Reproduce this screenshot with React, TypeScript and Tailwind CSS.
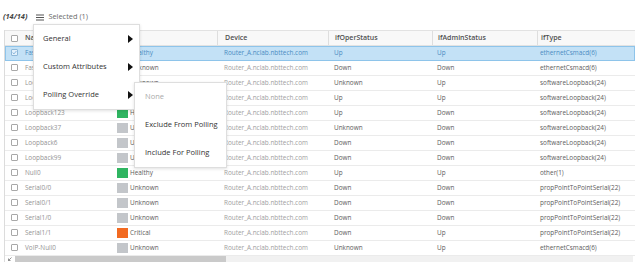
import React from "react";

type Row = {
  name: string;
  status: "Healthy" | "Unknown" | "Critical";
  oper: string;
  admin: string;
  type: string;
  selected?: boolean;
};

const rows: Row[] = [
  { name: "FastEthernet0/0", status: "Healthy", oper: "Up", admin: "Up", type: "ethernetCsmacd(6)", selected: true },
  { name: "FastEthernet0/1", status: "Unknown", oper: "Down", admin: "Down", type: "ethernetCsmacd(6)" },
  { name: "Loopback0", status: "Unknown", oper: "Unknown", admin: "Up", type: "softwareLoopback(24)" },
  { name: "Loopback1", status: "Unknown", oper: "Up", admin: "Up", type: "softwareLoopback(24)" },
  { name: "Loopback123", status: "Healthy", oper: "Up", admin: "Down", type: "softwareLoopback(24)" },
  { name: "Loopback37", status: "Unknown", oper: "Unknown", admin: "Down", type: "softwareLoopback(24)" },
  { name: "Loopback6", status: "Unknown", oper: "Down", admin: "Down", type: "softwareLoopback(24)" },
  { name: "Loopback99", status: "Unknown", oper: "Down", admin: "Down", type: "softwareLoopback(24)" },
  { name: "Null0", status: "Healthy", oper: "Up", admin: "Up", type: "other(1)" },
  { name: "Serial0/0", status: "Unknown", oper: "Down", admin: "Down", type: "propPointToPointSerial(22)" },
  { name: "Serial0/1", status: "Unknown", oper: "Down", admin: "Down", type: "propPointToPointSerial(22)" },
  { name: "Serial1/0", status: "Unknown", oper: "Down", admin: "Down", type: "propPointToPointSerial(22)" },
  { name: "Serial1/1", status: "Critical", oper: "Down", admin: "Up", type: "propPointToPointSerial(22)" },
  { name: "VoIP-Null0", status: "Unknown", oper: "Unknown", admin: "Up", type: "ethernetCsmacd(6)" },
];

const swatch: Record<Row["status"], string> = {
  Healthy: "bg-[#2fb561]",
  Unknown: "bg-[#c3c6ca]",
  Critical: "bg-[#f26a21]",
};

function Checkbox({ checked }: { checked?: boolean }) {
  return (
    <div
      className={
        "w-[7px] h-[7px] border rounded-[1px] flex items-center justify-center " +
        (checked ? "border-[#8fb8d8] bg-[#e4f1fb]" : "border-[#a8a8a8] bg-white")
      }
    >
      {checked && (
        <svg width="5" height="5" viewBox="0 0 5 5">
          <path d="M0.6 2.6 L2 3.9 L4.4 1" fill="none" stroke="#7fb0d8" strokeWidth="0.9" />
        </svg>
      )}
    </div>
  );
}

function Arrow() {
  return (
    <svg width="5" height="8" viewBox="0 0 5 8" className="shrink-0">
      <polygon points="0,0 5,4 0,8" fill="#111" />
    </svg>
  );
}

export default function App() {
  return (
    <div className="relative w-[635px] h-[268px] overflow-hidden bg-white font-['Open_Sans',sans-serif]">
      {/* toolbar */}
      <div className="h-[30px] flex items-center pl-[3px] pt-[4px]">
        <span className="text-[7.4px] font-bold italic text-[#444]">(14/14)</span>
        <svg width="8" height="7" viewBox="0 0 8 7" className="ml-[9px]">
          <rect x="0" y="0.5" width="8" height="1" fill="#555" />
          <rect x="0" y="3" width="8" height="1" fill="#555" />
          <rect x="0" y="5.5" width="8" height="1" fill="#555" />
        </svg>
        <span className="ml-[4px] text-[7.4px] text-[#6a6a6a]">Selected (1)</span>
      </div>

      {/* table */}
      <div className="ml-[4px] border-l border-[#dcdcdc]">
        {/* header */}
        <div className="h-[16px] flex items-center bg-[#f8f8f8] border-t border-b border-[#e2e2e2] text-[7px] font-semibold text-[#505050]">
          <div className="w-[105px] h-full flex items-center">
            <div className="ml-[6px]">
              <Checkbox />
            </div>
            <span className="ml-[7px]">Name</span>
          </div>
          <div className="w-[107px] h-full flex items-center pl-[7px] border-l border-[#dedede]">Status</div>
          <div className="w-[111px] h-full flex items-center pl-[7px] border-l border-[#dedede]">Device</div>
          <div className="w-[104px] h-full flex items-center pl-[6px] border-l border-[#dedede]">ifOperStatus</div>
          <div className="w-[105px] h-full flex items-center pl-[5px] border-l border-[#dedede]">ifAdminStatus</div>
          <div className="flex-1 h-full flex items-center pl-[3px] border-l border-[#dedede]">ifType</div>
        </div>

        {/* rows */}
        {rows.map((r) => (
          <div
            key={r.name}
            className={
              "h-[15px] flex items-center text-[6.4px] border-b " +
              (r.selected
                ? "bg-[#c3e1f6] border-[#8ec4ea] outline outline-1 outline-[#8ec4ea] -outline-offset-1 text-[#4a8cc2]"
                : "border-[#ebebeb]")
            }
          >
            <div className="w-[105px] flex items-center">
              <div className="ml-[6px]">
                <Checkbox checked={r.selected} />
              </div>
              <span className={"ml-[7px] " + (r.selected ? "" : "text-[#939393]")}>{r.name}</span>
            </div>
            <div className="w-[107px] flex items-center pl-[7px]">
              <div className={"w-[11px] h-[10px] " + swatch[r.status]} />
              <span className={"ml-[2px] " + (r.selected ? "" : "text-[#5c5c5c]")}>{r.status}</span>
            </div>
            <div className={"w-[111px] pl-[7px] " + (r.selected ? "" : "text-[#a0a0a0]")}>Router_A.nclab.nbttech.com</div>
            <div className={"w-[104px] pl-[6px] " + (r.selected ? "" : "text-[#5c5c5c]")}>{r.oper}</div>
            <div className={"w-[105px] pl-[5px] " + (r.selected ? "" : "text-[#5c5c5c]")}>{r.admin}</div>
            <div className={"flex-1 pl-[3px] " + (r.selected ? "" : "text-[#5c5c5c]")}>{r.type}</div>
          </div>
        ))}

        {/* horizontal scrollbar */}
        <div className="h-[6px] flex items-center">
          <div className="w-[10px] h-full flex items-center justify-center">
            <svg width="4" height="4" viewBox="0 0 4 4">
              <path d="M3.5 0.5 L0.5 3.5 M0.5 1.5 L0.5 3.5 L2.5 3.5" fill="none" stroke="#666" strokeWidth="0.7" />
            </svg>
          </div>
          <div className="flex-1 h-full bg-[#f1f1f1] mr-[2px] flex">
            <div className="w-[211px] h-full bg-[#cacaca]" />
          </div>
        </div>
      </div>

      {/* main context menu */}
      <div className="absolute left-[33px] top-[24px] w-[107px] bg-white border border-[#dedede] shadow-[0_1px_3px_rgba(0,0,0,0.12)] text-[7.5px] text-[#333]">
        {["General", "Custom Attributes", "Polling Override"].map((t) => (
          <div key={t} className="h-[28px] flex items-center justify-between pl-[9px] pr-[6px]">
            <span>{t}</span>
            <Arrow />
          </div>
        ))}
      </div>

      {/* submenu */}
      <div className="absolute left-[134px] top-[82px] w-[93px] bg-white border border-[#dedede] shadow-[0_1px_3px_rgba(0,0,0,0.12)] text-[7.5px] text-[#333]">
        <div className="h-[28px] flex items-center pl-[10px] text-[#aaa]">None</div>
        <div className="h-[28px] flex items-center pl-[10px]">Exclude From Polling</div>
        <div className="h-[28px] flex items-center pl-[10px]">Include For Polling</div>
      </div>
    </div>
  );
}
